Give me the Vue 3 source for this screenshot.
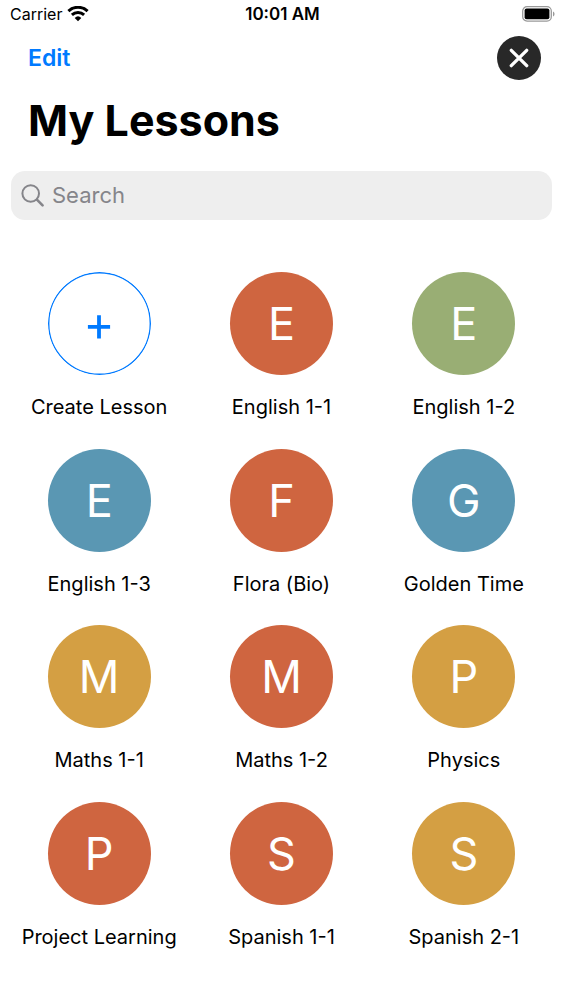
<script setup>
import { ref } from 'vue'

const query = ref('')
const lessons = [
  { letter: 'E', name: 'English 1-1', tone: 'red' },
  { letter: 'E', name: 'English 1-2', tone: 'green' },
  { letter: 'E', name: 'English 1-3', tone: 'blue' },
  { letter: 'F', name: 'Flora (Bio)', tone: 'red' },
  { letter: 'G', name: 'Golden Time', tone: 'blue' },
  { letter: 'M', name: 'Maths 1-1', tone: 'gold' },
  { letter: 'M', name: 'Maths 1-2', tone: 'red' },
  { letter: 'P', name: 'Physics', tone: 'gold' },
  { letter: 'P', name: 'Project Learning', tone: 'red' },
  { letter: 'S', name: 'Spanish 1-1', tone: 'red' },
  { letter: 'S', name: 'Spanish 2-1', tone: 'gold' },
]
</script>

<template>
  <div class="screen">
    <div class="status">
      <div class="carrier">
        <span>Carrier</span>
        <svg class="wifi" width="22" height="16" viewBox="0 0 22 16" aria-hidden="true">
          <path d="M1.4 5.1a14 14 0 0 1 19.2 0M4.9 8.8a9 9 0 0 1 12.2 0" fill="none" stroke="#000" stroke-width="3" />
          <path d="M11 15.2 7.7 11.9a4.8 4.8 0 0 1 6.6 0z" />
        </svg>
      </div>
      <span class="time">10:01 AM</span>
      <svg class="battery" width="33" height="16" viewBox="0 0 33 16" aria-hidden="true">
        <rect x=".7" y=".7" width="28.6" height="14.4" rx="4.4" fill="none" stroke="#999" stroke-width="1.3" />
        <rect x="2.6" y="2.6" width="24.8" height="10.6" rx="2" />
        <path d="M31 5.4v5c2-.8 2-4.2 0-5z" fill="#999" />
      </svg>
    </div>
    <header class="bar">
      <button class="edit" type="button">Edit</button>
      <button class="close" type="button" aria-label="Close">
        <svg width="20" height="20" viewBox="0 0 20 20"><path d="m2.3 2.3 15.4 15.4M17.7 2.3 2.3 17.7" fill="none" stroke="#fff" stroke-width="3.3" stroke-linecap="round" /></svg>
      </button>
    </header>
    <h1>My Lessons</h1>
    <label class="search">
      <svg width="24" height="24" viewBox="0 0 24 24" aria-hidden="true">
        <g fill="none" stroke="#85858a" stroke-linecap="round"><circle cx="9.7" cy="9.5" r="8.3" stroke-width="2" /><path d="m15.9 15.7 5.7 5.7" stroke-width="2.6" /></g>
      </svg>
      <input v-model="query" type="text" placeholder="Search" aria-label="Search" />
    </label>
    <main class="grid">
      <button class="lesson" type="button">
        <svg class="disc" viewBox="0 0 103 103" aria-hidden="true">
          <circle cx="51.5" cy="51.5" r="50.8" fill="none" stroke="#007aff" stroke-width="1.4" />
          <path d="M51 43.3v23.2M39.9 54.9h22.2" fill="none" stroke="#007aff" stroke-width="3.8" />
        </svg>
        <span class="name">Create Lesson</span>
      </button>
      <button v-for="lesson in lessons" :key="lesson.name" class="lesson" type="button">
        <span class="disc" :class="lesson.tone">{{ lesson.letter }}</span>
        <span class="name">{{ lesson.name }}</span>
      </button>
    </main>
  </div>
</template>

<style>
body { background: #fff; }
</style>

<style scoped>
.screen { display: flex; flex-direction: column; min-height: 100vh; font-family: Inter, "Liberation Sans", sans-serif; color: #000; }
button { border: 0; padding: 0; background: none; font: inherit; color: inherit; cursor: pointer; }
svg { display: block; flex: none; }
.status { display: grid; grid-template-columns: 1fr auto 1fr; align-items: center; height: 28px; padding: 0 8px 0 10px; font-size: 16px; }
.carrier { display: flex; align-items: center; gap: 5px; }
.time { font-size: 17px; font-weight: 600; }
.battery { justify-self: end; }
.bar { display: flex; align-items: center; justify-content: space-between; height: 60px; padding: 0 22px 0 28px; }
.edit { color: #007aff; font-size: 23px; font-weight: 600; }
.close { display: grid; place-items: center; width: 44px; height: 44px; border-radius: 50%; background: #282828; }
h1 { margin: 0; padding: 0 28px; font-size: 43px; line-height: 64px; font-weight: 700; }
.search { display: flex; align-items: center; gap: 7px; height: 49px; margin: 19px 11px 0; padding: 0 10px; border-radius: 14px; background: #eee; }
.search input { flex: 1; min-width: 0; border: 0; padding: 0 0 2px; outline: 0; background: none; font: inherit; font-size: 22px; color: #000; }
.search input::placeholder { color: #85858a; opacity: 1; }
.grid { flex: 1; display: grid; grid-template-columns: repeat(3, 1fr); grid-auto-rows: max-content; align-content: space-between; row-gap: 27px; padding: 52px 8px 49px; }
.lesson { display: flex; flex-direction: column; align-items: center; gap: 18px; min-width: 0; }
.disc { display: grid; place-items: center; width: 103px; height: 103px; border-radius: 50%; color: #fff; font-size: 45px; line-height: 1; }
.red { background: #cf6540; }
.green { background: #99ae74; }
.blue { background: #5a97b3; }
.gold { background: #d49f43; }
.name { font-size: 20px; line-height: 28px; white-space: nowrap; }
</style>
